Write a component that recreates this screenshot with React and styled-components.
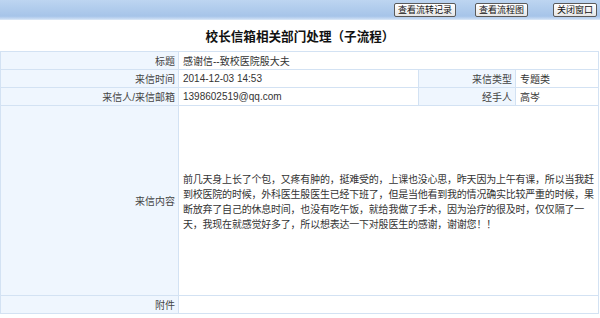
import React from "react";
import styled, { createGlobalStyle } from "styled-components";

const GlobalStyle = createGlobalStyle`
  html, body {
    margin: 0;
    padding: 0;
    background: #ffffff;
  }
  body {
    font-family: "Liberation Sans", "Noto Sans CJK SC", sans-serif;
    color: #333333;
  }
`;

const Page = styled.div`
  width: 600px;
  height: 318px;
  overflow: hidden;
  background: #ffffff;
`;

//上部の青いバー、ボタンは右寄せ
const TopBar = styled.div`
  height: 20px;
  box-sizing: border-box;
  display: flex;
  align-items: center;
  justify-content: flex-end;
  padding-right: 3px;
  background: linear-gradient(#bdd5f1, #a6c4e9 85%, #c9dcf3);
  border-bottom: 1px solid #d6e4f5;
`;

const BarButton = styled.button`
  height: 14px;
  margin-left: ${(p) => p.$gap}px;
  padding: 0 3px;
  box-sizing: border-box;
  border: 1px solid #5a5a5a;
  border-radius: 2px;
  background: linear-gradient(#ffffff, #e6e6e6);
  font-family: "Noto Sans CJK SC", sans-serif;
  font-size: 9px;
  line-height: 12px;
  color: #111111;
  cursor: pointer;
`;

const Title = styled.h1`
  margin: 0;
  height: 31px;
  display: flex;
  align-items: center;
  justify-content: center;
  font-family: "Noto Sans CJK SC", sans-serif;
  font-size: 12.6px;
  font-weight: bold;
  color: #111111;
`;

const Table = styled.table`
  width: 598px;
  border-collapse: collapse;
  table-layout: fixed;
  font-size: 10px;
`;

const Row = styled.tr`
  height: ${(p) => p.$h || 18}px;
`;

const Label = styled.td`
  border: 1px solid #d3e2f3;
  background: #eff6fe;
  text-align: right;
  padding: 0 3px 0 0;
  color: #444444;
  white-space: nowrap;
`;

const Value = styled.td`
  border: 1px solid #d3e2f3;
  background: #ffffff;
  text-align: left;
  padding: 0 0 0 4px;
  color: #333333;
`;

const Letter = styled.div`
  font-family: "Noto Sans CJK SC", sans-serif;
  font-size: 10px;
  line-height: 15px;
  letter-spacing: -0.22px;
  padding-right: 2px;
`;

export default function App() {
  return (
    <Page>
      <GlobalStyle />
      <TopBar>
        <BarButton $gap={0}>查看流转记录</BarButton>
        <BarButton $gap={19}>查看流程图</BarButton>
        <BarButton $gap={25}>关闭窗口</BarButton>
      </TopBar>
      <Title>校长信箱相关部门处理（子流程）</Title>
      <Table>
        <colgroup>
          <col style={{ width: 178 }} />
          <col style={{ width: 240 }} />
          <col style={{ width: 97 }} />
          <col style={{ width: 83 }} />
        </colgroup>
        <tbody>
          <Row>
            <Label>标题</Label>
            <Value colSpan={3}>感谢信--致校医院殷大夫</Value>
          </Row>
          <Row>
            <Label>来信时间</Label>
            <Value>2014-12-03 14:53</Value>
            <Label>来信类型</Label>
            <Value>专题类</Value>
          </Row>
          <Row>
            <Label>来信人/来信邮箱</Label>
            <Value>1398602519@qq.com</Value>
            <Label>经手人</Label>
            <Value>高岑</Value>
          </Row>
          <Row $h={190}>
            <Label>来信内容</Label>
            <Value colSpan={3}>
              <Letter>
                前几天身上长了个包，又疼有肿的，挺难受的，上课也没心思，昨天因为上午有课，所以当我赶到校医院的时候，外科医生殷医生已经下班了，但是当他看到我的情况确实比较严重的时候，果断放弃了自己的休息时间，也没有吃午饭，就给我做了手术，因为治疗的很及时，仅仅隔了一天，我现在就感觉好多了，所以想表达一下对殷医生的感谢，谢谢您！！
              </Letter>
            </Value>
          </Row>
          <Row>
            <Label>附件</Label>
            <Value colSpan={3}></Value>
          </Row>
        </tbody>
      </Table>
    </Page>
  );
}
